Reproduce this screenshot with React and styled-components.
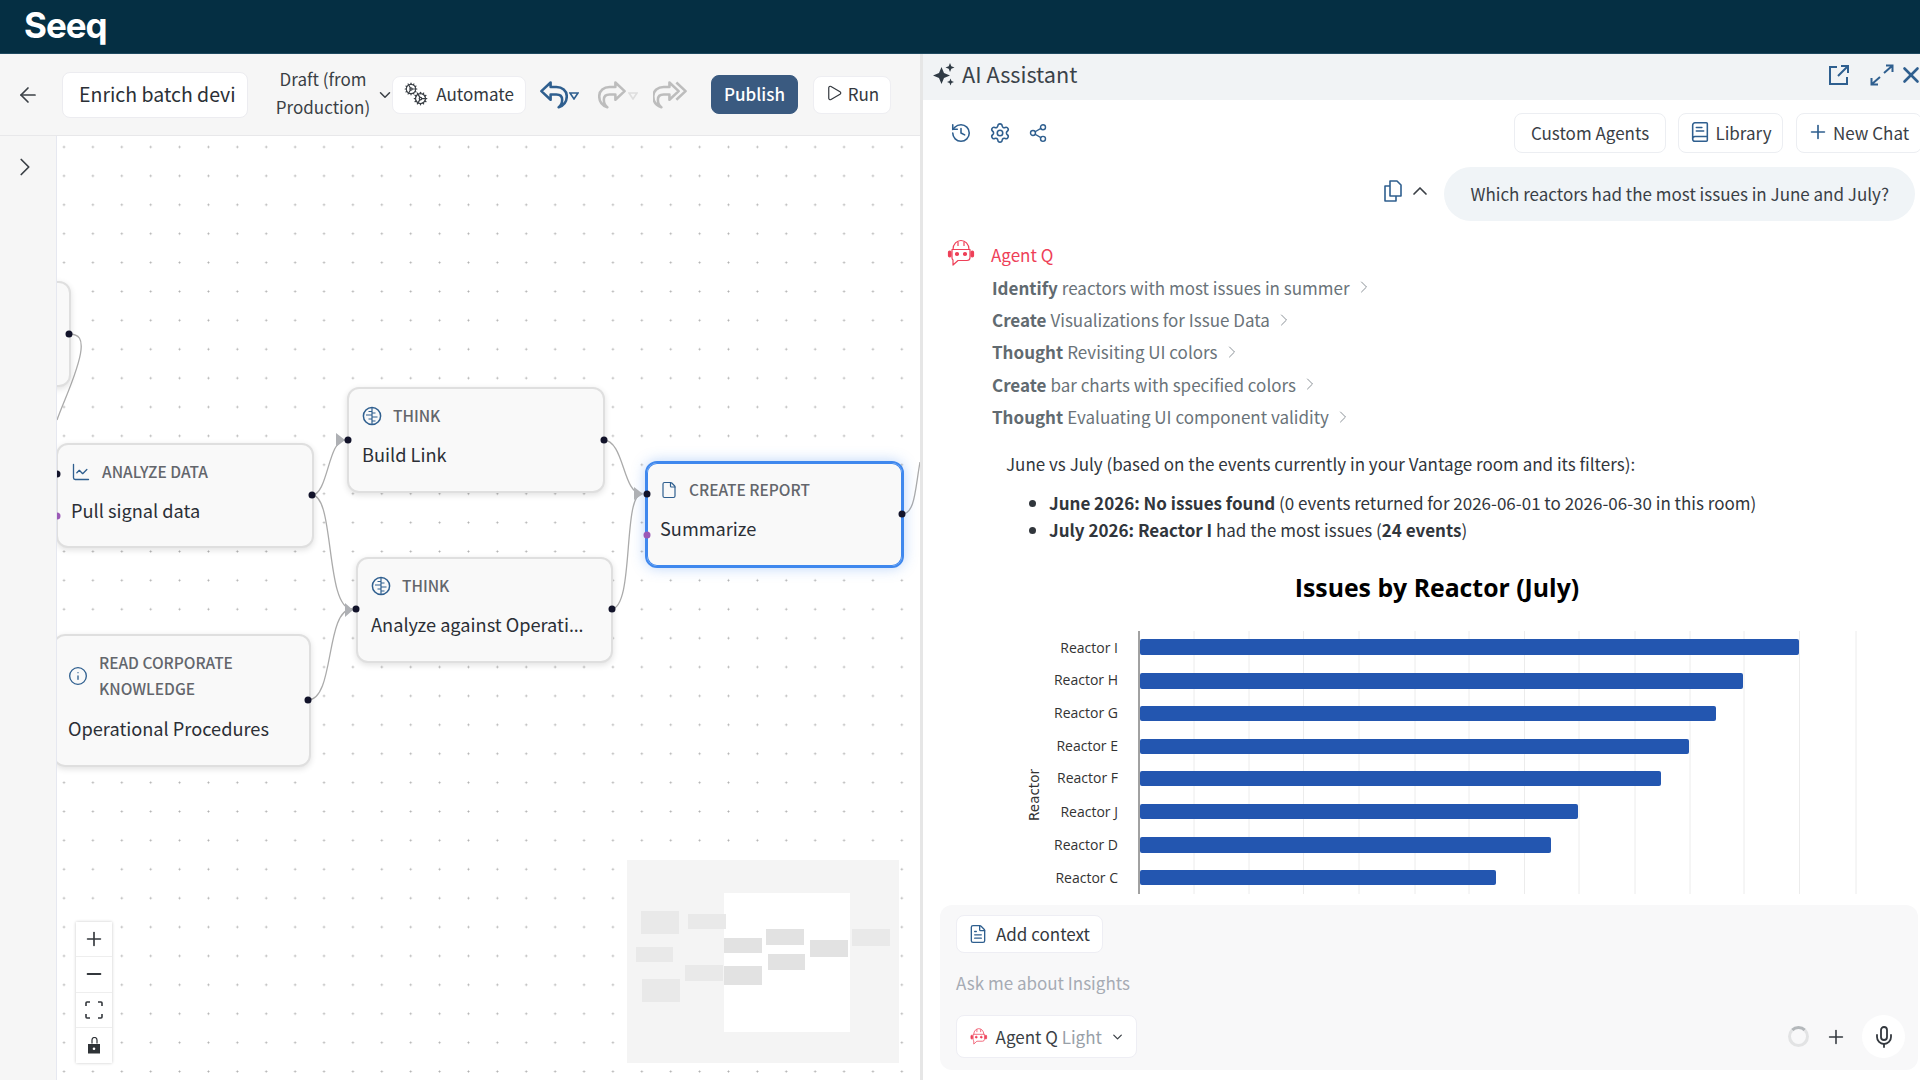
import React from 'react'
import styled, { createGlobalStyle } from 'styled-components'
import {
  ArrowLeft, ChevronDown, ChevronRight, ChevronUp, Play, Plus, History, Settings, Share2,
  ChartLine, Info, File, FileText, Minus, Mic, BookText, X, Cog,
} from 'lucide-react'

const BLUE = '#2f5f8f'
const RED = '#ee4058'

const GlobalStyle = createGlobalStyle`
  html, body { margin: 0; padding: 0; background: #fff; }
  body { font-family: "Noto Sans CJK SC", "Noto Sans", sans-serif; color: #2b3036; }
  * { box-sizing: border-box; }
`

const Page = styled.div`
  width: 1920px;
  height: 1080px;
  display: flex;
  flex-direction: column;
  overflow: hidden;
`

const TopBar = styled.header`
  height: 54px;
  flex: none;
  background: #052f43;
  border-bottom: 1px solid #1f4a60;
  padding-left: 24px;
  display: flex;
  align-items: center;
`

const Logo = styled.span`
  font-family: Inter, sans-serif;
  font-weight: 700;
  font-size: 35px;
  letter-spacing: -1px;
  color: #fff;
  line-height: 1;
  margin-top: -2px;
`

const Body = styled.div`
  flex: 1;
  display: flex;
  min-height: 0;
`

const LeftSide = styled.section`
  width: 923px;
  flex: none;
  display: flex;
  flex-direction: column;
  border-right: 3px solid #e6e6e6;
`

const Toolbar = styled.div`
  height: 82px;
  flex: none;
  background: #f6f6f6;
  border-bottom: 1px solid #e8e8ea;
  padding-left: 18px;
  display: flex;
  align-items: center;
`

const BackButton = styled.span`
  display: flex;
  width: 20px;
  color: #3b4046;
  svg { flex: none; margin-left: -2px; }
`

const TitleBox = styled.div`
  margin-left: 24px;
  width: 186px;
  height: 46px;
  background: #fff;
  border: 1px solid #ececf0;
  border-radius: 8px;
  padding-left: 16px;
  font-size: 19.5px;
  line-height: 42px;
  white-space: nowrap;
  overflow: hidden;
`

const DraftLabel = styled.div`
  margin-left: 20px;
  margin-top: -3px;
  width: 110px;
  flex: none;
  text-align: center;
  font-size: 17px;
  line-height: 28px;
  color: #3a3f45;
`

const DraftCaret = styled.span`
  display: flex;
  width: 14px;
  color: #3b4046;
  svg { margin-left: -2px; flex: none; }
`

const ToolButton = styled.button`
  height: 38px;
  margin-left: ${p => p.$gap || 0}px;
  width: ${p => p.$w}px;
  border: 1px solid #eeeef2;
  border-radius: 8px;
  background: #fff;
  color: #33383e;
  font: inherit;
  font-size: 17px;
  display: flex;
  align-items: center;
  justify-content: center;
  gap: 5px;
  padding: 0 0 3px;
  svg { flex: none; }
`

const PublishButton = styled(ToolButton)`
  height: 39px;
  background: #3a5a80;
  border-color: #3a5a80;
  color: #fff;
  font-weight: 500;
`

const Cogs = styled.span`
  position: relative;
  display: block;
  width: 24px;
  height: 24px;
  margin-right: 3px;
  margin-top: 2px;
  color: #3b4046;
  svg { position: absolute; }
  svg:first-child { left: 0; top: 0; }
  svg:last-child { right: 0; bottom: 0; }
`

const HistoryIcon = styled.svg`
  display: block;
  flex: none;
  margin-left: ${p => p.$gap || 0}px;
  margin-top: -2px;
  transform: ${p => (p.$flip ? 'scaleX(-1)' : 'none')};
`

const CaretIcon = styled.svg`
  display: block;
  flex: none;
  margin-left: 1px;
  margin-top: 3px;
`

const Workspace = styled.div`
  flex: 1;
  display: flex;
  min-height: 0;
`

const Rail = styled.aside`
  width: 57px;
  flex: none;
  background: #f6f6f6;
  border-right: 1px solid #e6e8f0;
  padding: 16px 0 0 10px;
  color: #3b4046;
`

const Canvas = styled.div`
  position: relative;
  flex: 1;
  overflow: hidden;
  background-color: #fff;
  background-image: radial-gradient(circle at center, #aeaeae 0.9px, transparent 1.1px);
  background-size: 28.9px 28.9px;
  background-position: -7.45px -3.45px;
`

const Edges = styled.svg`
  position: absolute;
  left: 0;
  top: 0;
  width: 863px;
  height: 944px;
`

const FlowNode = styled.div`
  position: absolute;
  left: ${p => p.$x - 57}px;
  top: ${p => p.$y - 136}px;
  width: ${p => p.$w}px;
  height: ${p => p.$h}px;
  padding: 14px 14px 0 13px;
  display: flex;
  flex-direction: column;
  background: #f9f9f9;
  border: 2px solid ${p => (p.$selected ? '#3f88ee' : '#dfdfdf')};
  border-radius: 12px;
  box-shadow: ${p => (p.$selected ? 'inset 0 0 0 1px #3f88ee, 0 0 14px rgba(63,136,238,.35)' : '0 2px 6px rgba(0,0,0,.12)')};
`

const NodeHead = styled.div`
  display: flex;
  align-items: center;
  gap: 11px;
  margin-bottom: ${p => p.$after || 12}px;
  color: ${BLUE};
  svg { flex: none; }
`

const NodeLabel = styled.span`
  font-size: 15.5px;
  line-height: 25.5px;
  font-weight: 500;
  color: #63666c;
  text-transform: uppercase;
`

const NodeTitle = styled.div`
  font-size: 18.2px;
  line-height: 26px;
  color: #2b2f36;
  white-space: nowrap;
`

const Ell = styled.span`
  font-family: "Noto Sans", sans-serif;
`

const ZoomControls = styled.div`
  position: absolute;
  left: 19px;
  top: 786px;
  width: 36px;
  display: flex;
  flex-direction: column;
  background: #fff;
  box-shadow: 0 0 3px rgba(0,0,0,.22);
`

const ZoomButton = styled.span`
  height: 35.25px;
  display: flex;
  align-items: center;
  justify-content: center;
  border-bottom: 1px solid #eee;
  color: #33373c;
  &:last-child { border-bottom: 0; }
`

const MiniMap = styled.svg`
  position: absolute;
  left: 570px;
  top: 724px;
  width: 272px;
  height: 203px;
`

const Panel = styled.section`
  flex: 1;
  min-width: 0;
  display: flex;
  flex-direction: column;
  overflow: hidden;
`

const PanelHeader = styled.div`
  height: 46px;
  flex: none;
  background: #f1f3f5;
  padding: 0 0 7px 9px;
  display: flex;
  align-items: center;
  color: #3a4249;
  font-size: 21.7px;
  gap: 6px;
`

const PanelTitle = styled.span`
  flex: 1;
`

const HeaderIcons = styled.div`
  display: flex;
  align-items: center;
  color: ${BLUE};
  margin-right: -4px;
  margin-bottom: -2px;
  svg { flex: none; }
  svg:nth-child(2) { margin: 0 4px 0 20px; }
`

const PanelTools = styled.div`
  flex: none;
  margin: 13px -2px 0 0;
  height: 40px;
  padding-left: 27px;
  display: flex;
  align-items: center;
  color: ${BLUE};
`

const ToolIcons = styled.div`
  flex: 1;
  display: flex;
  align-items: center;
  gap: 17px;
`

const PanelButton = styled.button`
  height: 40px;
  width: ${p => p.$w}px;
  margin-left: ${p => p.$gap || 0}px;
  flex: none;
  display: flex;
  align-items: center;
  justify-content: center;
  gap: 4px;
  background: #fff;
  border: 1px solid #eceef2;
  border-radius: 8px;
  font: inherit;
  font-size: 17px;
  color: #3a4046;
  padding: 0 0 2px;
  svg { color: ${BLUE}; flex: none; }
`

const NewChatButton = styled(PanelButton)`
  justify-content: flex-start;
  padding-left: 10px;
`

const Messages = styled.div`
  flex: 1;
  min-height: 0;
  overflow: hidden;
`

const QuestionRow = styled.div`
  margin-top: 14px;
  padding-right: 5px;
  display: flex;
  justify-content: flex-end;
  align-items: center;
`

const QuestionTools = styled.div`
  display: flex;
  align-items: center;
  gap: 6px;
  margin-right: 12px;
  margin-top: -6px;
  color: #3b4046;
  svg:first-child { color: ${BLUE}; }
`

const Bubble = styled.div`
  height: 54px;
  padding: 0 26px;
  border-radius: 27px;
  background: #f0f4f7;
  font-size: 17px;
  line-height: 53px;
  color: #3a4046;
`

const AgentRow = styled.div`
  margin-top: 16px;
  height: 32px;
  padding-left: 24px;
  display: flex;
  align-items: center;
  gap: 16px;
  color: ${RED};
  font-size: 17px;
  span { margin-top: 2px; }
  svg { margin-top: -1px; }
`

const Steps = styled.div`
  margin-top: 3px;
  padding-left: 69px;
`

const Step = styled.div`
  height: 32.4px;
  display: flex;
  align-items: center;
  gap: 4px;
  font-size: 17px;
  color: #6a7379;
  span { margin-top: -2px; }
  b { font-weight: 700; margin-right: 4px; color: #616a70; }
  svg { color: #8b9298; margin-top: -2px; }
`

const Answer = styled.div`
  margin-top: 16px;
  padding-left: 83px;
  font-size: 17px;
  line-height: 27px;
  color: #31363c;
`

const AnswerList = styled.ul`
  margin: 12px 0 0;
  padding: 0 0 0 43px;
  b { font-weight: 700; }
`

const ChartFrame = styled.svg`
  display: block;
  margin: 17px 0 0 78px;
`

const InputBox = styled.div`
  flex: none;
  height: 165px;
  margin: 11px 2px 10px 17px;
  padding: 10px 16px 0;
  background: #f8f8f9;
  border-radius: 12px;
  display: flex;
  flex-direction: column;
`

const ContextButton = styled.button`
  align-self: flex-start;
  width: 147px;
  height: 38px;
  display: flex;
  align-items: center;
  justify-content: center;
  gap: 8px;
  background: #fff;
  border: 1px solid #eeeef4;
  border-radius: 8px;
  font: inherit;
  font-size: 17px;
  color: #33383e;
  padding: 0 1px 1px 0;
  svg { color: ${BLUE}; }
`

const Placeholder = styled.div`
  margin-top: 17px;
  font-size: 17px;
  line-height: 26px;
  color: #a6abb4;
`

const InputFooter = styled.div`
  margin-top: 19px;
  display: flex;
  align-items: center;
  height: 43px;
`

const AgentSelect = styled.div`
  width: 181px;
  height: 43px;
  display: flex;
  align-items: center;
  padding: 0 11px 0 13px;
  gap: 8px;
  background: #fff;
  border: 1px solid #eeeef4;
  border-radius: 8px;
  font-size: 17px;
  color: #3a3f45;
  white-space: nowrap;
  em { font-style: normal; color: #98a0a8; }
  svg:last-child { margin-left: auto; }
`

const Spinner = styled.span`
  margin-left: auto;
  width: 21px;
  height: 21px;
  border-radius: 50%;
  border: 3px solid #e2e3e4;
  border-top-color: #b4b8bb;
`

const PlusButton = styled.span`
  display: flex;
  margin-left: 16px;
  color: #33383e;
`

const MicButton = styled.span`
  margin-left: 15px;
  margin-right: -3px;
  width: 43px;
  height: 43px;
  border-radius: 50%;
  background: #fff;
  display: flex;
  align-items: center;
  justify-content: center;
  color: #33383e;
`

// reply arrow used by undo / redo, flip for redo
const ReplyArrow = ({ color, flip, gap, all }) => (
  <HistoryIcon $flip={flip} $gap={gap} width={all ? 34 : 29} height="30" viewBox={all ? '-5 0 29 26' : '0 0 25 26'} fill="none" stroke={color} strokeWidth="2.2" strokeLinejoin="round">
    <path d="M10 3 2 10.500 10 18v-4.500h5c3.500 0 5 2 5 4.500 0 2.500-1 5-3 6.500 4.500-1.500 7-5 7-9.500 0-5-4-8-9-8h-5z" />
    {all && <path d="M4 3-4 10.500 4 18" />}
  </HistoryIcon>
)

const Caret = ({ color }) => (
  <CaretIcon width="10" height="8" viewBox="0 0 10 8" fill="none" stroke={color} strokeWidth="1.600">
    <path d="M1 1h8L5 7z" />
  </CaretIcon>
)

const BrainIcon = () => (
  <svg width="20" height="20" viewBox="0 0 20 20" fill="none" stroke={BLUE} strokeWidth="1.500">
    <circle cx="10" cy="10" r="8.600" />
    <path d="M10 1.500v17M10 5.500H6.500M10 9H4M10 13H6.500M10 7h3.500M10 11h5.500M10 15h3.500" strokeWidth="1.200" />
  </svg>
)

const AgentIcon = ({ size = 28 }) => (
  <svg width={size} height={size} viewBox="0 0 28 28" fill="none" stroke={RED} strokeWidth="1.200" strokeLinejoin="round">
    <path d="M6 10.500C6 5 10 1.500 14 1.500S22 5 22 10.500" />
    <path d="M11 2.500V7M17 2.500V7" />
    <path d="M5 10.500h18v8a3 3 0 0 1-3 3h-9l-5 4.500v-5a3 3 0 0 1-1-2.500z" />
    <circle cx="10" cy="15" r="1.500" fill={RED} />
    <circle cx="18" cy="15" r="1.500" fill={RED} />
    <rect x="1.500" y="12" width="2.500" height="6" rx="1.200" fill={RED} />
    <rect x="24" y="12" width="2.500" height="6" rx="1.200" fill={RED} />
  </svg>
)

const SparkIcon = () => (
  <svg width="24" height="24" viewBox="0 0 24 24" fill="#2f3a44">
    <path d="M9.500 5 12 11l6 2.500-6 2.500-2.500 6L7 16l-6-2.500L7 11z" />
    <path d="M18 1l1.300 3.200L22.500 5.500 19.300 6.800 18 10l-1.300-3.200L13.500 5.500l3.200-1.300zM18.500 16.500l1 2.500 2.500 1-2.500 1-1 2.500-1-2.500-2.500-1 2.500-1z" />
  </svg>
)

const OpenExternalIcon = () => (
  <svg width="22" height="22" viewBox="0 0 22 22" fill="none" stroke="currentColor" strokeWidth="2">
    <path d="M9 3H2v17h17v-7M10 12l9-9M13 2h7v7" />
  </svg>
)

const ExpandIcon = () => (
  <svg width="24" height="22" viewBox="0 0 24 22" fill="none" stroke="currentColor" strokeWidth="2">
    <path d="M14 9l8-7M16 1.500h6.500V8M10 13l-8 7M8 20.500H1.500V14" />
  </svg>
)

const CopyIcon = () => (
  <svg width="19" height="22" viewBox="0 0 19 22" fill="none" stroke="currentColor" strokeWidth="1.600" strokeLinejoin="round">
    <path d="M7 1h7l4 4v11H7z" />
    <path d="M7 6H2v15h11v-5" />
  </svg>
)

const FitIcon = () => (
  <svg width="18" height="18" viewBox="0 0 18 18" fill="none" stroke="#33373c" strokeWidth="1.600">
    <path d="M1 5V2a1 1 0 0 1 1-1h3M13 1h3a1 1 0 0 1 1 1v3M17 13v3a1 1 0 0 1-1 1h-3M5 17H2a1 1 0 0 1-1-1v-3" />
  </svg>
)

const LockIcon = () => (
  <svg width="14" height="17" viewBox="0 0 14 17" fill="#2f3337">
    <path d="M1 7h12v9.500H1z" />
    <circle cx="7" cy="11.800" r="1.300" fill="#fff" />
    <path d="M4 7V3.500C4 2 5 1 6.500 1S9 2 9 3.500V7" fill="none" stroke="#2f3337" strokeWidth="1.200" transform="translate(1 -.5)" />
  </svg>
)

const nodes = [
  { id: 'top', x: 14, y: 281, w: 57, h: 106 },
  { id: 'analyze', x: 56, y: 443, w: 258, h: 105, label: 'Analyze data', title: 'Pull signal data', icon: <ChartLine size={20} strokeWidth={1.6} /> },
  { id: 'think1', x: 347, y: 387, w: 258, h: 106, label: 'Think', title: 'Build Link', icon: <BrainIcon /> },
  { id: 'think2', x: 356, y: 557, w: 257, h: 106, label: 'Think', title: <>Analyze against Operati<Ell>…</Ell></>, icon: <BrainIcon /> },
  { id: 'read', x: 53, y: 634, w: 258, h: 133, label: 'Read corporate knowledge', title: 'Operational Procedures', icon: <Info size={20} strokeWidth={1.6} />, after: 14 },
  { id: 'report', x: 645, y: 461, w: 259, h: 107, label: 'Create report', title: 'Summarize', icon: <File size={18} strokeWidth={1.6} />, selected: true },
]

const edges = [
  'M69 334C80 334 82 340 81 350C79 370 64 400 57 420',
  'M312 495C328 495 328 440 345 440',
  'M312 495C335 495 325 609 352 609',
  'M308 700C335 700 325 609 352 609',
  'M603 440C625 440 622 494 642 494',
  'M611 609C635 609 622 494 642 494',
  'M902 514C915 514 915 490 920 462',
]

const arrows = ['336,433 345,440 336,447', '345,603 353,610 345,617', '634,487 643,494 634,500']

const handles = [
  [69, 334], [57, 474], [312, 495], [348, 440], [604, 440], [356, 609], [612, 609], [308, 700], [647, 494], [902, 514],
]

const miniNodes = [
  [641, 911, 38, 23, '#e9e9e9'], [688, 914, 38, 15, '#e9e9e9'], [636, 947, 37, 15, '#e9e9e9'],
  [685, 965, 38, 16, '#e9e9e9'], [642, 979, 38, 23, '#e9e9e9'], [724, 938, 38, 15, '#e2e2e2'],
  [724, 966, 38, 19, '#e2e2e2'], [766, 929, 38, 16, '#e2e2e2'], [768, 954, 37, 16, '#e2e2e2'],
  [810, 940, 38, 17, '#e2e2e2'], [852, 929, 38, 17, '#e9e9e9'],
]

const steps = [
  ['Identify', 'reactors with most issues in summer'],
  ['Create', 'Visualizations for Issue Data'],
  ['Thought', 'Revisiting UI colors'],
  ['Create', 'bar charts with specified colors'],
  ['Thought', 'Evaluating UI component validity'],
]

const bars = [
  { name: 'Reactor I', y: 639, h: 16, end: 1798, label: 648 },
  { name: 'Reactor H', y: 673, h: 16, end: 1742, label: 680 },
  { name: 'Reactor G', y: 706, h: 15, end: 1715, label: 713 },
  { name: 'Reactor E', y: 739, h: 15, end: 1688, label: 746 },
  { name: 'Reactor F', y: 771, h: 15, end: 1660, label: 778 },
  { name: 'Reactor J', y: 804, h: 15, end: 1577, label: 812 },
  { name: 'Reactor D', y: 837, h: 16, end: 1550, label: 845 },
  { name: 'Reactor C', y: 870, h: 15, end: 1495, label: 878 },
]

const gridLines = [1193, 1248, 1302.5, 1358, 1414, 1468, 1523.5, 1578, 1634, 1689, 1743, 1798.5, 1855]

const Chart = () => (
  <ChartFrame width="900" height="340" viewBox="1000 560 900 340">
    <text x="1436" y="597" textAnchor="middle" fontFamily="Open Sans" fontWeight="700" fontSize="24.800" fill="#000">Issues by Reactor (July)</text>
    {gridLines.map(x => <line key={x} x1={x} x2={x} y1="631" y2="894" stroke="#ececec" />)}
    <line x1="1138" x2="1138" y1="631" y2="894" stroke="#444" />
    {bars.map(b => (
      <g key={b.name}>
        <rect x="1139" y={b.y} width={b.end - 1139} height={b.h} rx="2" fill="#2356b0" />
        <text x="1117" y={b.label + 5} textAnchor="end" fontFamily="Open Sans" fontSize="14" fill="#333">{b.name}</text>
      </g>
    ))}
    <text transform="translate(1038 795) rotate(-90)" textAnchor="middle" fontFamily="DejaVu Sans" fontSize="13.500" fill="#333">Reactor</text>
  </ChartFrame>
)

export default function App() {
  return (
    <Page>
      <GlobalStyle />
      <TopBar><Logo>Seeq</Logo></TopBar>
      <Body>
        <LeftSide>
          <Toolbar>
            <BackButton><ArrowLeft size={24} strokeWidth={1.7} /></BackButton>
            <TitleBox>Enrich batch devi</TitleBox>
            <DraftLabel>Draft (from Production)</DraftLabel>
            <DraftCaret><ChevronDown size={18} /></DraftCaret>
            <ToolButton $w={134}>
              <Cogs><Cog size={14} /><Cog size={15} /></Cogs>
              Automate
            </ToolButton>
            <ReplyArrow color={BLUE} gap={13} />
            <Caret color={BLUE} />
            <ReplyArrow color="#bdbdbd" flip gap={19} />
            <Caret color="#dedede" />
            <ReplyArrow color="#bdbdbd" flip all gap={15} />
            <PublishButton $w={87} $gap={24}>Publish</PublishButton>
            <ToolButton $w={78} $gap={15}><Play size={18} strokeWidth={1.6} />Run</ToolButton>
          </Toolbar>
          <Workspace>
            <Rail><ChevronRight size={30} strokeWidth={1.4} /></Rail>
            <Canvas>
              <Edges viewBox="57 136 863 944">
                {edges.map(d => <path key={d} d={d} fill="none" stroke="#ababab" strokeWidth="1.300" />)}
              </Edges>
              {nodes.map(n => (
                <FlowNode key={n.id} $x={n.x} $y={n.y} $w={n.w} $h={n.h} $selected={n.selected}>
                  {n.label && (
                    <>
                      <NodeHead $after={n.after}>{n.icon}<NodeLabel>{n.label}</NodeLabel></NodeHead>
                      <NodeTitle>{n.title}</NodeTitle>
                    </>
                  )}
                </FlowNode>
              ))}
              <Edges viewBox="57 136 863 944">
                {arrows.map(p => <polygon key={p} points={p} fill="#aeb0b4" />)}
                {handles.map(([x, y]) => <circle key={`${x}-${y}`} cx={x} cy={y} r="3.500" fill="#12132a" />)}
                <circle cx="647" cy="535" r="3.500" fill="#9b59b6" />
                <circle cx="57" cy="516" r="3.500" fill="#9b59b6" />
              </Edges>
              <ZoomControls>
                <ZoomButton><Plus size={22} strokeWidth={1.8} /></ZoomButton>
                <ZoomButton><Minus size={22} strokeWidth={2} /></ZoomButton>
                <ZoomButton><FitIcon /></ZoomButton>
                <ZoomButton><LockIcon /></ZoomButton>
              </ZoomControls>
              <MiniMap viewBox="627 860 272 203">
                <rect x="627" y="860" width="272" height="203" fill="#f4f4f4" />
                <rect x="724" y="893" width="126" height="139" fill="#fff" />
                {miniNodes.map(([x, y, w, h, fill]) => <rect key={`${x}-${y}`} x={x} y={y} width={w} height={h} fill={fill} />)}
              </MiniMap>
            </Canvas>
          </Workspace>
        </LeftSide>
        <Panel>
          <PanelHeader>
            <SparkIcon />
            <PanelTitle>AI Assistant</PanelTitle>
            <HeaderIcons>
              <OpenExternalIcon />
              <ExpandIcon />
              <X size={26} strokeWidth={2.4} />
            </HeaderIcons>
          </PanelHeader>
          <PanelTools>
            <ToolIcons>
              <History size={22} strokeWidth={1.7} />
              <Settings size={22} strokeWidth={1.7} />
              <Share2 size={20} strokeWidth={1.7} />
            </ToolIcons>
            <PanelButton $w={152}>Custom Agents</PanelButton>
            <PanelButton $w={105} $gap={12}><BookText size={22} strokeWidth={1.7} />Library</PanelButton>
            <NewChatButton $w={126} $gap={13}><Plus size={22} strokeWidth={1.8} />New Chat</NewChatButton>
          </PanelTools>
          <Messages>
            <QuestionRow>
              <QuestionTools>
                <CopyIcon />
                <ChevronUp size={24} strokeWidth={1.7} />
              </QuestionTools>
              <Bubble>Which reactors had the most issues in June and July?</Bubble>
            </QuestionRow>
            <AgentRow>
              <AgentIcon />
              <span>Agent Q</span>
            </AgentRow>
            <Steps>
              {steps.map(([verb, rest]) => (
                <Step key={rest}>
                  <span><b>{verb}</b>{rest}</span>
                  <ChevronRight size={20} strokeWidth={1.2} />
                </Step>
              ))}
            </Steps>
            <Answer>
              June vs July (based on the events currently in your Vantage room and its filters):
              <AnswerList>
                <li><b>June 2026: No issues found</b> (0 events returned for 2026-06-01 to 2026-06-30 in this room)</li>
                <li><b>July 2026: Reactor I</b> had the most issues (<b>24 events</b>)</li>
              </AnswerList>
            </Answer>
            <Chart />
          </Messages>
          <InputBox>
            <ContextButton><FileText size={20} strokeWidth={1.6} />Add context</ContextButton>
            <Placeholder>Ask me about Insights</Placeholder>
            <InputFooter>
              <AgentSelect>
                <AgentIcon size={21} />
                <span>Agent Q <em>Light</em></span>
                <ChevronDown size={18} />
              </AgentSelect>
              <Spinner />
              <PlusButton><Plus size={22} strokeWidth={1.7} /></PlusButton>
              <MicButton><Mic size={24} strokeWidth={1.8} /></MicButton>
            </InputFooter>
          </InputBox>
        </Panel>
      </Body>
    </Page>
  )
}
